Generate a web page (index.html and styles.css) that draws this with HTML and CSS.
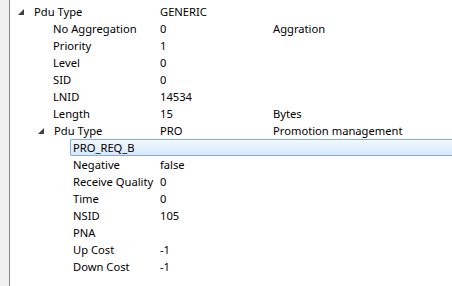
FILE: index.html
```html
<!DOCTYPE html>
<html lang="en">
<head>
<meta charset="UTF-8">
<title>Pdu tree</title>
<link rel="stylesheet" href="styles.css">
</head>
<body>
<div class="frame">
    <div class="gutter"></div>
    <div class="tree">
        <div class="row lvl0"><div class="name"><span class="arrow"></span>Pdu Type</div><div class="val">GENERIC</div><div class="desc"></div></div>
        <div class="row lvl1"><div class="name">No Aggregation</div><div class="val">0</div><div class="desc">Aggration</div></div>
        <div class="row lvl1"><div class="name">Priority</div><div class="val">1</div><div class="desc"></div></div>
        <div class="row lvl1"><div class="name">Level</div><div class="val">0</div><div class="desc"></div></div>
        <div class="row lvl1"><div class="name">SID</div><div class="val">0</div><div class="desc"></div></div>
        <div class="row lvl1"><div class="name">LNID</div><div class="val">14534</div><div class="desc"></div></div>
        <div class="row lvl1"><div class="name">Length</div><div class="val">15</div><div class="desc">Bytes</div></div>
        <div class="row lvl1b"><div class="name"><span class="arrow"></span>Pdu Type</div><div class="val">PRO</div><div class="desc">Promotion management</div></div>
        <div class="row lvl2 selected"><div class="name">PRO_REQ_B</div><div class="val"></div><div class="desc"></div></div>
        <div class="row lvl2"><div class="name">Negative</div><div class="val">false</div><div class="desc"></div></div>
        <div class="row lvl2"><div class="name">Receive Quality</div><div class="val">0</div><div class="desc"></div></div>
        <div class="row lvl2"><div class="name">Time</div><div class="val">0</div><div class="desc"></div></div>
        <div class="row lvl2"><div class="name">NSID</div><div class="val">105</div><div class="desc"></div></div>
        <div class="row lvl2"><div class="name">PNA</div><div class="val"></div><div class="desc"></div></div>
        <div class="row lvl2"><div class="name">Up Cost</div><div class="val">-1</div><div class="desc"></div></div>
        <div class="row lvl2"><div class="name">Down Cost</div><div class="val">-1</div><div class="desc"></div></div>
    </div>
</div>
</body>
</html>
```
FILE: styles.css
```css
html, body{
    margin: 0;
    padding: 0;
    background: #fff;
}

body{
    font-family: "Noto Sans", "Liberation Sans", sans-serif;
    font-size: 11.2px;
    color: #000;
}

.frame{
    display: flex;
    width: 452px;
    height: 286px;
    overflow: hidden;
}

.gutter{
    width: 9px;
    background: #f0f0f0;
    border-right: solid 1px #828790;
    flex: none;
}

.tree{
    flex: 1;
    padding-top: 3px;
}

.row{
    display: grid;
    grid-template-columns: 150px 113px 1fr;
    height: 17px;
    line-height: 17px;
    white-space: nowrap;
}

.name{
    display: flex;
    align-items: center;
}

.lvl0 .name{ padding-left: 8px; }
.lvl1 .name{ padding-left: 43px; }
.lvl1b .name{ padding-left: 28px; }
.lvl2 .name{ padding-left: 63px; }

.arrow{
    width: 0;
    height: 0;
    border-left: 6px solid transparent;
    border-bottom: 6px solid #404040;
    margin-right: 10px;
    margin-top: 1px;
}

.selected{
    margin-left: 60px;
    grid-template-columns: 90px 113px 1fr;
    border: solid 1px #84acdd;
    border-right: none;
    border-radius: 2px 0 0 2px;
    background: linear-gradient(#f2f8fe, #d6e8fc);
    height: 15px;
    line-height: 15px;
}

.selected .name{
    padding-left: 2px;
}
```
